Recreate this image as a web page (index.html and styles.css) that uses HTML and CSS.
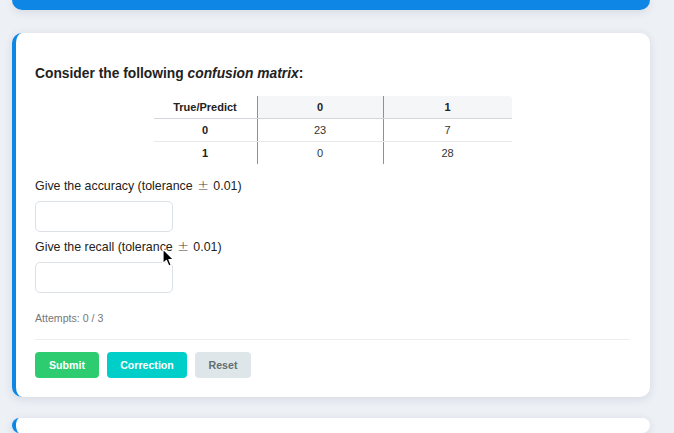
FILE: index.html
```html
<!DOCTYPE html>
<html>
<head>
<meta charset="utf-8">
<link rel="stylesheet" href="styles.css">
</head>
<body>
<div class="page">
  <div class="topbar"></div>
  <div class="card">
    <div class="title">Consider the following <em>confusion matrix</em>:</div>
    <table class="matrix">
      <thead>
        <tr><th class="corner">True/Predict</th><th>0</th><th class="last">1</th></tr>
      </thead>
      <tbody>
        <tr><th>0</th><td>23</td><td>7</td></tr>
        <tr><th>1</th><td>0</td><td>28</td></tr>
      </tbody>
    </table>
    <div class="label">Give the accuracy (tolerance <span class="pm">±</span> 0.01)</div>
    <input class="field" type="text">
    <div class="label">Give the recall (tolerance <span class="pm">±</span> 0.01)</div>
    <input class="field" type="text">
    <div class="attempts">Attempts: 0 / 3</div>
    <div class="divider"></div>
    <div class="actions">
      <button class="btn submit">Submit</button>
      <button class="btn correction">Correction</button>
      <button class="btn reset">Reset</button>
    </div>
  </div>
  <div class="card next"></div>
</div>
<svg class="cursor" width="13" height="20" viewBox="0 0 13 20">
  <path d="M1 1 L1 15.5 L4.4 12.4 L6.8 18 L9.2 17 L6.9 11.5 L11.5 11.5 Z" fill="#000" stroke="#fff" stroke-width="1.2" stroke-linejoin="round"/>
</svg>
</body>
</html>
```
FILE: styles.css
```css
html, body {
  margin: 0;
  padding: 0;
  background: #edf0f5;
  font-family: "Liberation Sans", Arial, sans-serif;
  color: #222;
  overflow: hidden;
}
.page {
  width: 638px;
  margin-left: 12px;
}
.topbar {
  height: 10px;
  background: #0d86e6;
  border-radius: 0 0 10px 10px;
  box-shadow: 0 2px 8px rgba(40, 60, 90, 0.12);
  margin-bottom: 23px;
}
.card {
  background: #fff;
  border-left: 4px solid #0d86e6;
  border-radius: 10px;
  box-shadow: 0 2px 10px rgba(40, 60, 90, 0.12);
  padding: 31px 20px 19px 19px;
  display: flex;
  flex-direction: column;
  align-items: flex-start;
}
.card.next {
  margin-top: 21px;
  height: 15px;
  padding: 0;
}
.title {
  font-size: 13.8px;
  font-weight: bold;
  line-height: 20px;
  color: #222;
}
.title em {
  font-style: italic;
}
.matrix {
  align-self: center;
  margin-top: 12px;
  border-collapse: collapse;
  font-size: 11px;
  color: #333;
}
.matrix th, .matrix td {
  height: 22px;
  padding: 0;
  text-align: center;
  vertical-align: middle;
}
.matrix th { font-weight: bold; color: #222; }
.matrix td { color: #333; }
.matrix tr > :first-child { width: 103px; border-right: 1px solid #8d9196; }
.matrix tr > :nth-child(2) { width: 125px; border-right: 1px solid #8d9196; }
.matrix tr > :nth-child(3) { width: 128px; }
.matrix thead th { background: #f5f6f8; border-bottom: 1px solid #d3d7dc; }
.matrix thead th.corner { background: #fff; }
.matrix thead th.last { border-top-right-radius: 4px; }
.matrix tbody tr:first-child > * { border-bottom: 1px solid #e6e8eb; }
.label {
  font-size: 12.4px;
  line-height: 18px;
  height: 18px;
  color: #222;
  margin-top: 13px;
}
.field + .label { margin-top: 6px; }
.pm {
  color: #444;
  font-size: 14px;
  line-height: 0;
  font-family: "DejaVu Sans", sans-serif;
  font-weight: 200;
  margin: 0 1px;
}
.field {
  box-sizing: border-box;
  width: 138px;
  height: 31px;
  margin: 6px 0 0;
  border: 1px solid #dce1e6;
  border-radius: 5px;
  background: #fff;
  outline: none;
}
.attempts {
  font-size: 10.6px;
  line-height: 14px;
  color: #777;
  margin-top: 18px;
}
.divider {
  align-self: stretch;
  height: 1px;
  background: #eceef1;
  margin-top: 14px;
}
.actions {
  display: flex;
  gap: 8px;
  margin-top: 12px;
}
.btn {
  height: 26px;
  border: none;
  border-radius: 4px;
  font-family: "Liberation Sans", Arial, sans-serif;
  font-size: 10.6px;
  font-weight: bold;
  color: #fff;
  padding: 0;
}
.submit { background: #2ecc71; width: 64px; }
.correction { background: #00cec9; width: 80px; }
.reset { background: #dfe6e9; color: #636e72; width: 56px; }
.cursor {
  position: absolute;
  left: 162px;
  top: 248px;
}
```
